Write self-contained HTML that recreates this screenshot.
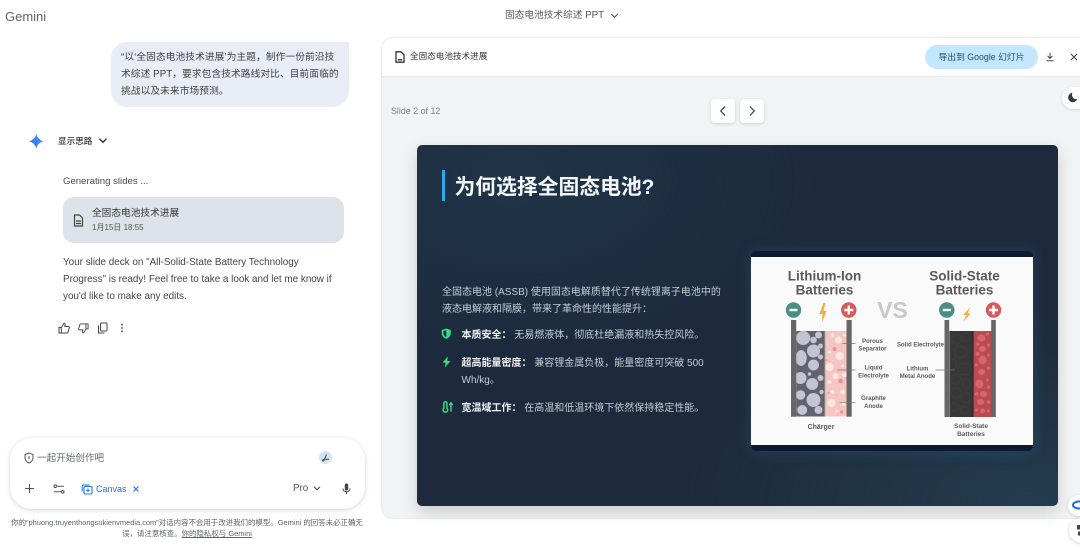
<!DOCTYPE html>
<html lang="zh">
<head>
<meta charset="utf-8">
<style>
*{box-sizing:border-box}
html,body{margin:0;padding:0;width:1080px;height:548px;overflow:hidden;background:#fff}
body{position:relative;font-family:"Liberation Sans","Noto Sans CJK SC",sans-serif;color:#444746;filter:blur(.35px)}
.a{position:absolute;white-space:nowrap}
svg{position:absolute;display:block}
</style>
</head>
<body>
<div class="a" style="left:5px;top:8px;font-size:13px;line-height:17px;color:#5f6368">Gemini</div>
<div class="a" style="left:505px;top:8px;font-size:9.7px;line-height:15px;color:#555">固态电池技术综述 PPT</div>
<svg style="left:610px;top:12px" width="9" height="8" viewBox="0 0 9 8"><path d="M1.2 2l3.3 3.3L7.800 2" fill="none" stroke="#555" stroke-width="1.100"/></svg>

<!-- user bubble -->
<div class="a" style="left:111px;top:42px;width:238px;height:65px;background:#e9edf6;border-radius:16px 0 16px 16px"></div>
<div class="a" style="left:121px;top:49px;font-size:9.700px;letter-spacing:.1px;line-height:17px;color:#3f3f3f">“以‘全固态电池技术进展’为主题，制作一份前沿技<br>术综述 PPT，要求包含技术路线对比、目前面临的<br>挑战以及未来市场预测。</div>

<!-- spark -->
<svg style="left:29px;top:134px" width="14.500" height="14.500" viewBox="0 0 15 15"><defs><linearGradient id="g" x1="0" y1="1" x2="1" y2="0"><stop offset="0" stop-color="#2b6cf0"/><stop offset="1" stop-color="#4f9bf5"/></linearGradient></defs><path d="M7.500 0Q9 6 15 7.500Q9 9 7.500 15Q6 9 0 7.500Q6 6 7.500 0Z" fill="url(#g)"/></svg>
<div class="a" style="left:58px;top:134px;font-size:8.600px;line-height:14px;color:#333;font-weight:500">显示思路</div>
<svg style="left:98px;top:137px" width="10" height="8" viewBox="0 0 10 8"><path d="M1.500 1.800L5 5.300l3.500-3.500" fill="none" stroke="#333" stroke-width="1.400"/></svg>
<div class="a" style="left:63px;top:174px;font-size:9.600px;line-height:15px;color:#4a4a4a">Generating slides ...</div>

<!-- doc card -->
<div class="a" style="left:63px;top:197px;width:281px;height:46px;background:#dde3ea;border-radius:11px"></div>
<svg style="left:73px;top:214px" width="11" height="13" viewBox="0 0 11 13"><path d="M1.500 1h5l3 3v8h-8zM3 7h5M3 9.500h5" fill="none" stroke="#444" stroke-width="1.200"/></svg>
<div class="a" style="left:92px;top:207px;font-size:9.700px;line-height:14px;color:#333">全固态电池技术进展</div>
<div class="a" style="left:92px;top:221px;font-size:8px;line-height:13px;color:#555">1月15日 18:55</div>

<div class="a" style="left:63px;top:254px;font-size:9.900px;line-height:17px;color:#444">Your slide deck on "All-Solid-State Battery Technology<br>Progress" is ready! Feel free to take a look and let me know if<br>you'd like to make any edits.</div>

<!-- feedback icons -->
<svg style="left:58px;top:322px" width="12" height="12" viewBox="0 0 12 12"><path d="M1 5.500h2.300v5.500H1zM3.300 5.500L6 1.200c1 0 1.300.8 1.100 1.700L6.800 4.500H10.500c.6 0 1 .6.8 1.200l-1.300 4.500c-.1.500-.5.800-1 .8H3.300" fill="none" stroke="#444" stroke-width="1"/></svg>
<svg style="left:78px;top:323px" width="11" height="11" viewBox="0 0 12 12"><path d="M11 6.500H8.700V1H11zM8.700 6.500L6 10.800c-1 0-1.300-.8-1.100-1.700L5.200 7.500H1.500C.9 7.500.5 6.900.7 6.300L2 1.800c.1-.5.500-.8 1-.8h5.700" fill="none" stroke="#444" stroke-width="1"/></svg>
<svg style="left:97px;top:322px" width="11" height="12" viewBox="0 0 11 12"><rect x="3.500" y="1" width="6.500" height="8" rx="1" fill="none" stroke="#444" stroke-width="1"/><path d="M1.500 3.500V11h6" fill="none" stroke="#444" stroke-width="1"/></svg>
<svg style="left:120px;top:323px" width="4" height="10" viewBox="0 0 4 10"><circle cx="2" cy="1.700" r=".9" fill="#444"/><circle cx="2" cy="5" r=".9" fill="#444"/><circle cx="2" cy="8.300" r=".9" fill="#444"/></svg>

<!-- input -->
<div class="a" style="left:10px;top:438px;width:355px;height:71px;background:#fff;border-radius:22px;box-shadow:0 1px 5px rgba(0,0,0,.18)"></div>
<svg style="left:24px;top:452px" width="10" height="12" viewBox="0 0 10 12"><path d="M5 1L1 2.500v3.300c0 2.500 1.700 4.300 4 5.200 2.300-.9 4-2.700 4-5.200V2.500z" fill="none" stroke="#555" stroke-width="1"/><path d="M5 4v3" stroke="#555" stroke-width="1"/></svg>
<div class="a" style="left:37px;top:451px;font-size:9.600px;line-height:15px;color:#5f6368">一起开始创作吧</div>
<div class="a" style="left:319px;top:451px;width:13px;height:13px;border-radius:50%;background:linear-gradient(135deg,#c9e3f5,#dfe3ea)"></div>
<svg style="left:321px;top:453px" width="10" height="10" viewBox="0 0 10 10"><path d="M5.500 1.500L3 7.500C2.700 8.400 1.700 8.400 1.500 7.500c-.1-.7.800-1.200 1.800-1.200H8" fill="none" stroke="#444" stroke-width="1"/></svg>
<svg style="left:24px;top:483px" width="11" height="11" viewBox="0 0 11 11"><path d="M5.500 1v9M1 5.500h9" stroke="#555" stroke-width="1.100"/></svg>
<svg style="left:53px;top:484px" width="12" height="10" viewBox="0 0 12 10"><path d="M4 2.200h7M1 7.800h7" stroke="#555" stroke-width="1"/><circle cx="2.200" cy="2.200" r="1.300" fill="#fff" stroke="#555"/><circle cx="9.800" cy="7.800" r="1.300" fill="#fff" stroke="#555"/></svg>
<svg style="left:81px;top:484px" width="12" height="11" viewBox="0 0 12 11"><rect x="3" y="2.500" width="8" height="7.500" rx="1.200" fill="none" stroke="#1a73e8" stroke-width="1.100"/><path d="M1.200 7.500V2.300C1.200 1.600 1.700 1 2.500 1h6M7 4.500v3.500M5.200 6.200h3.600" fill="none" stroke="#1a73e8" stroke-width="1"/></svg>
<div class="a" style="left:96px;top:482px;font-size:9px;line-height:14px;color:#1a73e8">Canvas</div>
<svg style="left:132px;top:485px" width="8" height="8" viewBox="0 0 8 8"><path d="M1.500 1.500l5 5M6.500 1.500l-5 5" stroke="#1a73e8" stroke-width="1.100"/></svg>
<div class="a" style="left:293px;top:481.500px;font-size:9.800px;line-height:14px;color:#555">Pro</div>
<svg style="left:313px;top:485px" width="8" height="7" viewBox="0 0 8 7"><path d="M1 1.800l3 3 3-3" fill="none" stroke="#555" stroke-width="1.100"/></svg>
<svg style="left:342px;top:483px" width="9" height="12" viewBox="0 0 9 12"><rect x="2.800" y="0.500" width="3.400" height="7" rx="1.700" fill="#444"/><path d="M1 5.500c0 2 1.500 3.200 3.500 3.200S8 7.500 8 5.500M4.500 9v2" fill="none" stroke="#444" stroke-width="1"/></svg>

<div class="a" style="left:10px;top:518px;width:354px;text-align:center;font-size:7.450px;line-height:10.500px;color:#5f6368">你的“phuong.truyenthongsukienvmedia.com”对话内容不会用于改进我们的模型。Gemini 的回答未必正确无<br>误，请注意核查。<span style="text-decoration:underline">你的隐私权与 Gemini</span></div>

<!-- panel -->
<div class="a" style="left:381px;top:37px;width:720px;height:482px;background:#f1f3f5;border:1px solid #e8eaed;border-radius:12px;overflow:hidden">
  <div style="position:absolute;left:0;top:0;width:100%;height:39px;background:#fff;border-bottom:1px solid #e8eaed"></div>
</div>
<svg style="left:395px;top:51px" width="10" height="12" viewBox="0 0 10 12"><path d="M1 .8h5l3 3v7.400H1zM2.800 8.800h4.400" fill="none" stroke="#333" stroke-width="1.300"/></svg>
<div class="a" style="left:410px;top:50px;font-size:8.600px;line-height:13px;color:#333">全固态电池技术进展</div>
<div class="a" style="left:925px;top:45px;width:113px;height:24px;border-radius:12px;background:#c2e7ff;color:#1f4f70;font-size:8.800px;line-height:25px;text-align:center">导出到 Google 幻灯片</div>
<svg style="left:1045px;top:52px" width="10" height="10" viewBox="0 0 10 10"><path d="M5 .8v5.400M2.600 4L5 6.400 7.400 4M1.500 8.800h7" fill="none" stroke="#444" stroke-width="1"/></svg>
<svg style="left:1070px;top:53px" width="8" height="8" viewBox="0 0 8 8"><path d="M1 1l6 6M7 1L1 7" stroke="#444" stroke-width="1.100"/></svg>

<div class="a" style="left:1062px;top:87px;width:26px;height:22px;border-radius:11px;background:#fff;box-shadow:0 1px 3px rgba(0,0,0,.12)"></div>
<svg style="left:1067px;top:92px" width="11" height="11" viewBox="0 0 11 11"><path d="M5.500.8A4.700 4.700 0 1 0 10.300 7 4.300 4.300 0 0 1 5.500.8Z" fill="#2d3a50"/></svg>

<div class="a" style="left:391px;top:103.500px;font-size:8.900px;line-height:14px;color:#7a8088">Slide 2 of 12</div>
<div class="a" style="left:711px;top:99px;width:24px;height:24px;background:#fff;border-radius:4px;box-shadow:0 1px 3px rgba(0,0,0,.15)"></div>
<div class="a" style="left:740px;top:99px;width:24px;height:24px;background:#fff;border-radius:4px;box-shadow:0 1px 3px rgba(0,0,0,.15)"></div>
<svg style="left:718px;top:105px" width="10" height="12" viewBox="0 0 10 12"><path d="M7 1.500L2.700 6 7 10.500" fill="none" stroke="#4b5563" stroke-width="1.300"/></svg>
<svg style="left:747px;top:105px" width="10" height="12" viewBox="0 0 10 12"><path d="M3 1.500L7.300 6 3 10.500" fill="none" stroke="#4b5563" stroke-width="1.300"/></svg>

<!-- slide -->
<div class="a" style="left:416.500px;top:145px;width:641.500px;height:361px;border-radius:5px;box-shadow:0 6px 16px rgba(0,0,0,.16);background:radial-gradient(ellipse 300px 180px at 15% 10%,#1f3448 0,rgba(31,52,72,0) 100%),radial-gradient(ellipse 340px 200px at 95% 100%,#233c4d 0,rgba(35,60,77,0) 100%),#1d2a3d"></div>
<div class="a" style="left:441.500px;top:170px;width:3px;height:31px;background:#2ea8e6"></div>
<div class="a" style="left:454.500px;top:173px;font-size:20.800px;line-height:30px;font-weight:700;color:#f5f7fa">为何选择全固态电池?</div>

<div class="a" style="left:442px;top:284px;font-size:10px;line-height:17px;color:#c5ccd6">全固态电池 (ASSB) 使用固态电解质替代了传统锂离子电池中的<br>液态电解液和隔膜，带来了革命性的性能提升：</div>
<svg style="left:441px;top:328px" width="10.500" height="11.500" viewBox="0 0 11 13" preserveAspectRatio="none"><path d="M5.500.5L.8 2.300v3.600c0 3 2 5.300 4.700 6.400 2.700-1.100 4.700-3.400 4.700-6.400V2.300z" fill="#3ddc84"/><path d="M5.500 2.500v8c-1.700-.9-2.900-2.500-2.900-4.600V3.600z" fill="#1d2a3d"/></svg>
<div class="a" style="left:461.500px;top:327px;font-size:10px;line-height:17px;color:#c5ccd6"><b style="color:#f1f3f5">本质安全：</b> 无易燃液体，彻底杜绝漏液和热失控风险。</div>
<svg style="left:442px;top:356px" width="9" height="12" viewBox="0 0 9 14" preserveAspectRatio="none"><path d="M5.800.5L.5 7.800h3.200L2.800 13.500 8.500 5.800H5.200z" fill="#3ddc84"/></svg>
<div class="a" style="left:461.500px;top:355px;font-size:10px;line-height:17px;color:#c5ccd6"><b style="color:#f1f3f5">超高能量密度：</b> 兼容锂金属负极，能量密度可突破 500<br>Wh/kg。</div>
<svg style="left:442px;top:401px" width="11" height="11.500" viewBox="0 0 12 13" preserveAspectRatio="none"><path d="M2 8V2.500a1.700 1.700 0 0 1 3.400 0V8a2.600 2.600 0 1 1-3.400 0z" fill="none" stroke="#3ddc84" stroke-width="1.600"/><path d="M9.800 12V2.500M8 4.500l1.800-2.500 1.800 2.500" fill="none" stroke="#3ddc84" stroke-width="1.500"/></svg>
<div class="a" style="left:461.500px;top:400px;font-size:10px;line-height:17px;color:#c5ccd6"><b style="color:#f1f3f5">宽温域工作：</b> 在高温和低温环境下依然保持稳定性能。</div>

<!-- battery image -->
<div class="a" style="left:750.500px;top:251px;width:282.500px;height:200px;border-radius:5px;background:#0d1a33;box-shadow:0 0 14px rgba(56,130,170,.28)"></div>
<svg style="left:750.500px;top:257px" width="282.500" height="188" viewBox="750.500 257 282.500 188">
<rect x="750" y="257" width="284" height="188" fill="#fafafa"/>
<g font-family="Liberation Sans,sans-serif" font-weight="700" text-anchor="middle" fill="#5a5a5a">
<text x="824" y="280.500" font-size="13.500">Lithium-Ion</text><text x="824" y="294.500" font-size="13.500">Batteries</text>
<text x="964" y="280.500" font-size="13.500">Solid-State</text><text x="964" y="294.500" font-size="13.500">Batteries</text>
<text x="892" y="318" font-size="23" fill="#c8c8c8">VS</text>
<g font-size="6">
<text x="872" y="343">Porous</text><text x="872" y="350.500">Separator</text>
<text x="920" y="346.500">Solid Electrolyte</text>
<text x="873" y="369.500">Liquid</text><text x="873" y="377.500">Electrolyte</text>
<text x="917" y="370.500">Lithium</text><text x="917" y="378">Metal Anode</text>
<text x="873" y="400">Graphite</text><text x="873" y="408">Anode</text>
<text x="820.500" y="429" font-size="7">Chärger</text>
<text x="970.500" y="428" font-size="6.500">Solid-State</text><text x="970.500" y="436" font-size="6.500">Batteries</text>
</g></g>
<circle cx="793" cy="310" r="7.700" fill="#4a8f85"/><rect x="789" y="308.800" width="8" height="2.400" fill="#fff"/>
<circle cx="848.300" cy="310" r="7.700" fill="#d8595c"/><path d="M848.300 305.500v9M843.800 310h9" stroke="#fff" stroke-width="2.400"/>
<circle cx="946.300" cy="310" r="7.700" fill="#4a8f85"/><rect x="942.300" y="308.800" width="8" height="2.400" fill="#fff"/>
<circle cx="993" cy="310" r="7.700" fill="#d8595c"/><path d="M993 305.500v9M988.500 310h9" stroke="#fff" stroke-width="2.400"/>
<path d="M823 303l-4 11h3l-.5 8.500 4.500-11.500h-3l2-8z" fill="#f6ab3c"/>
<path d="M970 307l-7.500 8h3.500l-3.500 6.500 8-8h-3.500l3-6.500z" fill="#f6ab3c"/>

<!-- left battery -->
<rect x="795.700" y="331" width="28" height="85.500" fill="#62626e"/>
<g fill="#c3c3d1">
<circle cx="802.700" cy="338" r="7"/><circle cx="813" cy="340" r="3.300"/><circle cx="818" cy="335" r="3.500"/><circle cx="813" cy="351" r="6.500"/>
<ellipse cx="800.700" cy="358" rx="5.500" ry="8"/><circle cx="820" cy="357" r="2.500"/><circle cx="813" cy="365" r="5.500"/><circle cx="820" cy="346" r="2.500"/>
<circle cx="800" cy="378" r="6"/><circle cx="811.700" cy="384" r="6"/><circle cx="820" cy="378" r="3"/><circle cx="800" cy="395" r="4.800"/><circle cx="813" cy="400" r="7"/>
<circle cx="801.700" cy="410" r="5"/><circle cx="818" cy="410" r="4"/><circle cx="821" cy="392" r="2.200"/><circle cx="809" cy="374" r="1.800"/>
</g>
<rect x="825" y="331" width="21" height="85.500" fill="#f4c6c2"/>
<g fill="#fbe6e2">
<circle cx="838" cy="340" r="3.500"/><circle cx="844" cy="335" r="1.800"/><circle cx="832" cy="335" r="1.800"/>
<circle cx="839" cy="356" r="4.200"/><circle cx="829" cy="367" r="4.200"/><circle cx="829" cy="352" r="1.500"/><circle cx="842" cy="366" r="1.500"/>
<circle cx="835" cy="376" r="3"/><circle cx="844" cy="375" r="2.500"/><circle cx="829" cy="382" r="2"/>
<circle cx="832" cy="392" r="2"/><circle cx="831" cy="403" r="4"/><circle cx="842" cy="392" r="2.500"/><circle cx="843" cy="404" r="1.800"/><circle cx="836" cy="411" r="1.500"/>
</g>
<g fill="#ec8f8d"><circle cx="834" cy="349" r="2"/><circle cx="840" cy="381" r="2.300"/><circle cx="846" cy="378" r="1"/><circle cx="841" cy="412" r="1.600"/><circle cx="828" cy="393" r="1"/><circle cx="826" cy="360" r="1"/></g>
<rect x="790.500" y="320" width="5.200" height="96.700" fill="#666"/><rect x="846" y="320" width="5.200" height="96.700" fill="#666"/>
<rect x="823.500" y="331" width="1.300" height="85.500" fill="#808080"/>
<!-- right battery -->
<rect x="949" y="331" width="23" height="86" fill="#373737"/>
<g fill="none" stroke="#404040" stroke-width=".7">
<circle cx="956" cy="339" r="5"/><ellipse cx="966" cy="337" rx="3.500" ry="4"/><circle cx="960" cy="352" r="6"/><ellipse cx="953" cy="364" rx="3.500" ry="5"/>
<circle cx="964" cy="369" r="6"/><circle cx="955" cy="379" r="5"/><ellipse cx="966" cy="384" rx="4" ry="5"/><circle cx="956" cy="393" r="5"/><circle cx="966" cy="398" r="5"/><circle cx="954" cy="407" r="4"/><circle cx="964" cy="410" r="4"/>
</g>
<rect x="972" y="331" width="1" height="86" fill="#222"/>
<rect x="973" y="331" width="18" height="86" fill="#b94c52"/>
<g fill="#d9666a">
<ellipse cx="981" cy="338" rx="4" ry="3.500"/><circle cx="987" cy="334" r="1.500"/><circle cx="977" cy="344" r="1.800"/><ellipse cx="982" cy="349" rx="3.500" ry="3"/><circle cx="988" cy="345" r="1.500"/>
<circle cx="977" cy="354" r="2"/><ellipse cx="982" cy="360" rx="4" ry="4.500"/><circle cx="988" cy="355" r="1.500"/><circle cx="976" cy="365" r="1.500"/><circle cx="988" cy="368" r="1.800"/><ellipse cx="981" cy="372" rx="3.500" ry="3"/>
<ellipse cx="979" cy="384" rx="4" ry="4.500"/><circle cx="987" cy="380" r="1.500"/><circle cx="988" cy="387" r="1.800"/><ellipse cx="983" cy="394" rx="3.500" ry="3"/><circle cx="976" cy="394" r="1.800"/>
<ellipse cx="980" cy="402" rx="3.500" ry="3"/><circle cx="988" cy="402" r="1.800"/><circle cx="982" cy="411" r="2.500"/><circle cx="976" cy="410" r="1.500"/><circle cx="988" cy="411" r="1.500"/>
</g>
<rect x="944" y="320" width="4.700" height="97" fill="#666"/><rect x="990.700" y="320" width="4.600" height="97" fill="#666"/>
<path d="M841.700 343.500H855M836.700 370H855M839 402.700H855M935 370H954" stroke="#777" stroke-width=".7"/>
</svg>

<!-- floating buttons -->
<div class="a" style="left:1068px;top:495px;width:24px;height:21px;border-radius:50%;background:#fff;box-shadow:0 1px 3px rgba(0,0,0,.15)"></div>
<svg style="left:1071px;top:498px" width="9" height="14" viewBox="0 0 9 14"><ellipse cx="8" cy="7" rx="6" ry="3.500" fill="none" stroke="#1a6fe8" stroke-width="2"/></svg>
<div class="a" style="left:1069px;top:518px;width:26px;height:25px;border-radius:50%;background:#fff;box-shadow:0 1px 4px rgba(0,0,0,.18)"></div>
<svg style="left:1077px;top:525px" width="4" height="11" viewBox="0 0 4 11"><rect x="0" y="0" width="4" height="4.500" fill="#444"/><rect x="1" y="6.500" width="3" height="4" fill="#444"/></svg>
</body>
</html>
